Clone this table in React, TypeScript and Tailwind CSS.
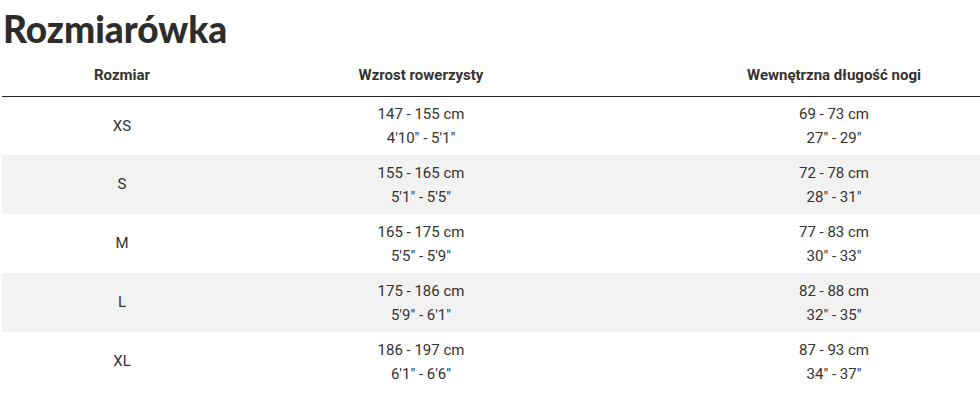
const rows = [
  { size: 'XS', cm: '147 - 155 cm', ft: `4'10" - 5'1"`, leg: '69 - 73 cm', legIn: '27" - 29"' },
  { size: 'S', cm: '155 - 165 cm', ft: `5'1" - 5'5"`, leg: '72 - 78 cm', legIn: '28" - 31"' },
  { size: 'M', cm: '165 - 175 cm', ft: `5'5" - 5'9"`, leg: '77 - 83 cm', legIn: '30" - 33"' },
  { size: 'L', cm: '175 - 186 cm', ft: `5'9" - 6'1"`, leg: '82 - 88 cm', legIn: '32" - 35"' },
  { size: 'XL', cm: '186 - 197 cm', ft: `6'1" - 6'6"`, leg: '87 - 93 cm', legIn: '34" - 37"' },
];

export default function App() {
  return (
    <div className="h-[418px] w-[980px] overflow-hidden bg-white font-['Roboto',sans-serif] text-[#333]">
      <h1 className="pl-[3px] pt-[7px] font-['Lato',sans-serif] text-[37px] font-black leading-[44px] text-[#2d2d2d]">
        Rozmiarówka
      </h1>
      <div className="ml-[2px] mt-[5px] overflow-hidden">
        <table className="w-[1066px] table-fixed border-collapse text-center">
          <colgroup>
            <col className="w-[240px]" />
            <col className="w-[358px]" />
            <col />
          </colgroup>
          <thead>
            <tr className="border-b border-[#222]">
              <th className="h-[40px] pb-[2px] text-[15px] font-bold">Rozmiar</th>
              <th className="h-[40px] pb-[2px] text-[15px] font-bold">Wzrost rowerzysty</th>
              <th className="h-[40px] pb-[2px] text-[15px] font-bold">Wewnętrzna długość nogi</th>
            </tr>
          </thead>
          <tbody>
            {rows.map((r, i) => (
              <tr key={r.size} className={i % 2 === 1 ? 'bg-[#f2f2f2]' : ''}>
                <td className="h-[59px] text-[15px]">{r.size}</td>
                <td className="h-[59px] text-[15px] leading-[24px]">
                  <div>{r.cm}</div>
                  <div>{r.ft}</div>
                </td>
                <td className="h-[59px] text-[15px] leading-[24px]">
                  <div>{r.leg}</div>
                  <div>{r.legIn}</div>
                </td>
              </tr>
            ))}
          </tbody>
        </table>
      </div>
    </div>
  );
}
